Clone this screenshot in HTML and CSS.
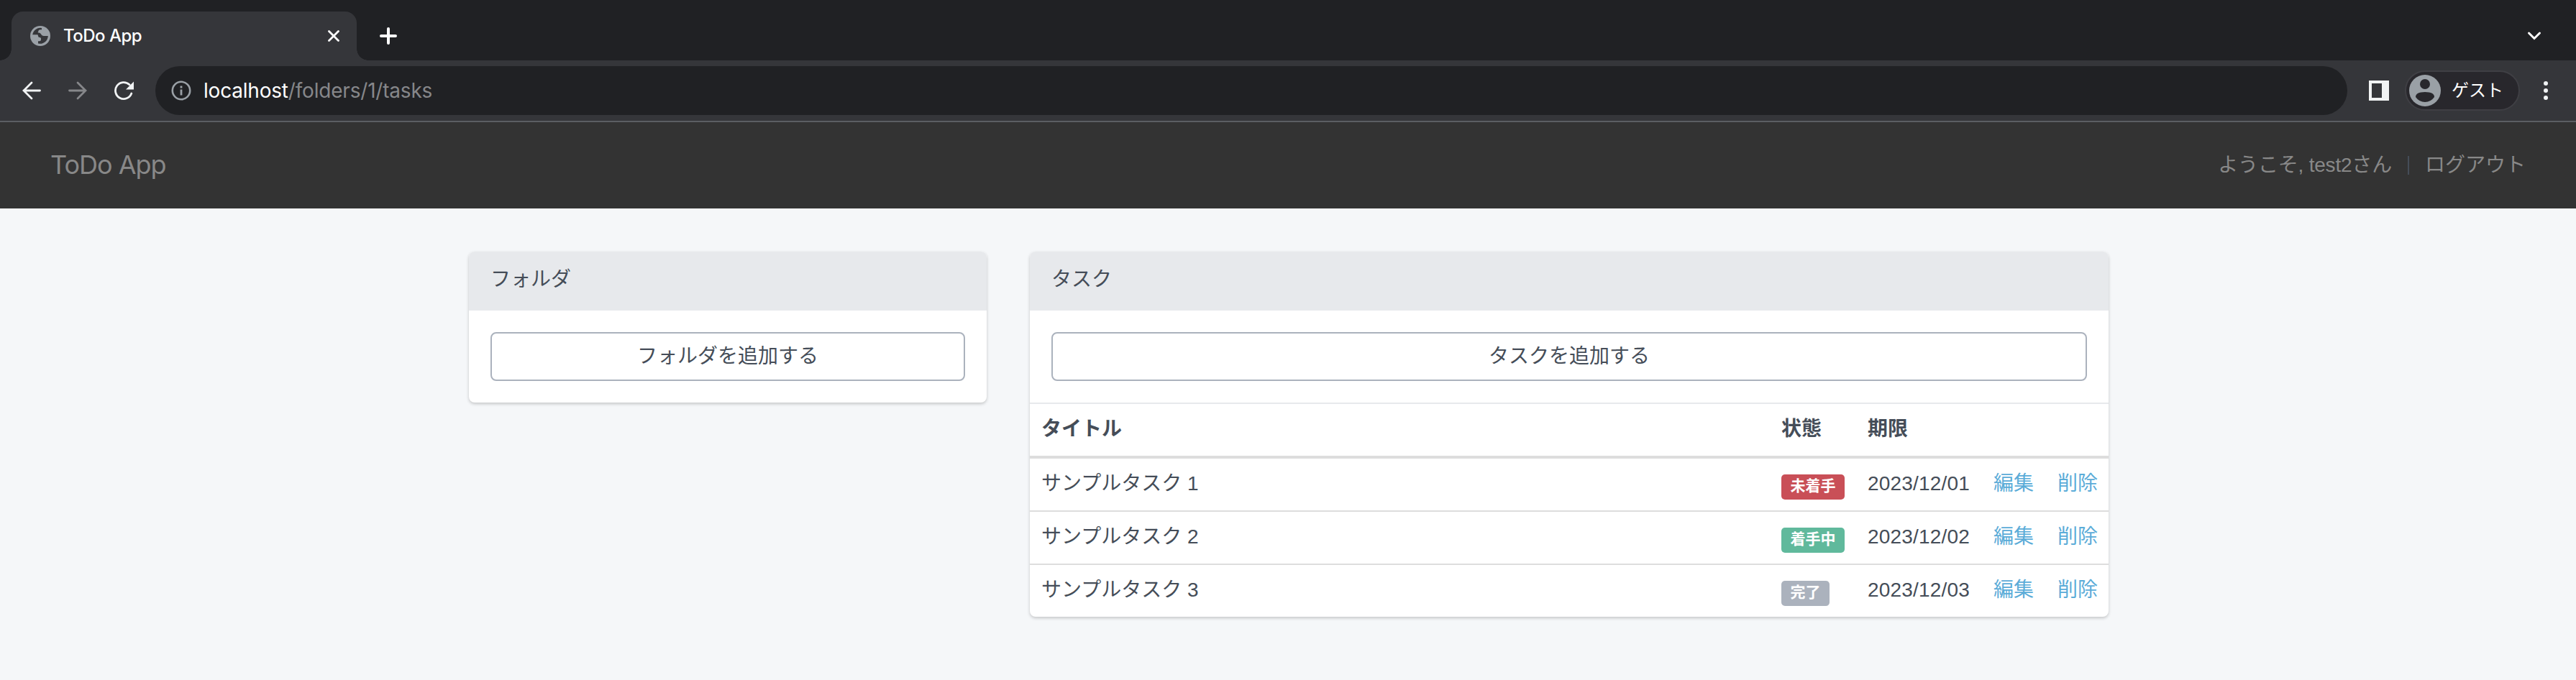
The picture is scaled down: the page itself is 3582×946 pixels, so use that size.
FILE: index.html
```html
<!DOCTYPE html>
<html lang="ja">
<head>
<meta charset="utf-8">
<title>ToDo App</title>
<link rel="stylesheet" href="styles.css">
</head>
<body>
<div class="tabstrip">
  <div class="tab">
    <svg class="globe" viewBox="0 0 28 28"><circle cx="14" cy="14" r="14" fill="#9aa0a6"/><path d="M16 3v2.200h-2.500q-2 0-2.300 2.500T9.500 9.500v2.800H3.200A11 11 0 0 1 16 3zM9.500 9.500H12q2 0 3 2t3.500 2.500h6.300A11 11 0 0 1 11 24.500v-3.300h2q2 0 2-2.200v-1.500q0-1.500-2-1.500t-2-2-1.500-2z" fill="#35363a"/></svg>
    <span class="tab-title">ToDo App</span>
    <svg class="close" viewBox="0 0 16 16"><path d="M1.500 1.500l13 13M14.500 1.500l-13 13" stroke="#fff" stroke-width="2.800" stroke-linecap="round"/></svg>
  </div>
  <svg class="plus" viewBox="0 0 24 24"><path d="M12 2v20M2 12h20" stroke="#fff" stroke-width="4" stroke-linecap="round"/></svg>
  <svg class="chevron" viewBox="0 0 20 14"><path d="M2.500 3l7.500 7.500L17.500 3" fill="none" stroke="#fff" stroke-width="3" stroke-linecap="round"/></svg>
</div>
<div class="toolbar">
  <svg class="nav-icon" viewBox="0 0 28 28"><path d="M25.500 14H3M14 3L3 14l11 11" fill="none" stroke="#f1f3f4" stroke-width="2.800" stroke-linecap="round"/></svg>
  <svg class="nav-icon" viewBox="0 0 28 28"><path d="M2.500 14H25M14 3l11 11-11 11" fill="none" stroke="#86878a" stroke-width="2.800" stroke-linecap="round"/></svg>
  <svg class="nav-icon" viewBox="0 0 28 28"><path d="M22 5.800A11.500 11.500 0 1 0 24.800 18" fill="none" stroke="#f1f3f4" stroke-width="2.800" stroke-linecap="round"/><path d="M28 1.500v11H17z" fill="#f1f3f4"/></svg>
  <div class="omnibox">
    <svg class="info" viewBox="0 0 28 28"><circle cx="14" cy="14" r="12.200" fill="none" stroke="#9aa0a6" stroke-width="2.600"/><path d="M14 12.500v8M14 7.500v3" stroke="#9aa0a6" stroke-width="2.800"/></svg>
    <span class="url"><b>localhost</b>/folders/1/tasks</span>
  </div>
  <svg class="panel" viewBox="0 0 28 28"><path fill-rule="evenodd" d="M0 0h28v28H0zM4 4v20h14V4z" fill="#f1f3f4"/></svg>
  <div class="profile">
    <svg class="avatar" viewBox="0 0 44 44"><circle cx="22" cy="22" r="22" fill="#9aa0a6"/><circle cx="22" cy="13" r="7" fill="#28272c"/><path d="M9 31q0-7 13-7t13 7q-5 7-13 7T9 31z" fill="#28272c"/></svg>
    <span>ゲスト</span>
  </div>
  <svg class="kebab" viewBox="0 0 6 28"><g fill="#f1f3f4"><circle cx="3" cy="4" r="3"/><circle cx="3" cy="14" r="3"/><circle cx="3" cy="24" r="3"/></g></svg>
</div>
<header class="navbar">
  <a class="brand">ToDo App</a>
  <nav class="user"><span class="welcome">ようこそ, test2さん</span><span class="sep"></span><a>ログアウト</a></nav>
</header>
<main class="columns">
  <section class="card folders">
    <h2 class="card-head">フォルダ</h2>
    <div class="card-body"><a class="button">フォルダを追加する</a></div>
  </section>
  <section class="card tasks">
    <h2 class="card-head">タスク</h2>
    <div class="card-body"><a class="button">タスクを追加する</a></div>
    <div class="table">
      <div class="row head"><span>タイトル</span><span>状態</span><span>期限</span><span></span><span></span></div>
      <div class="row"><span>サンプルタスク 1</span><span><i class="badge danger">未着手</i></span><span class="date">2023/12/01</span><a>編集</a><a>削除</a></div>
      <div class="row"><span>サンプルタスク 2</span><span><i class="badge success">着手中</i></span><span class="date">2023/12/02</span><a>編集</a><a>削除</a></div>
      <div class="row"><span>サンプルタスク 3</span><span><i class="badge muted">完了</i></span><span class="date">2023/12/03</span><a>編集</a><a>削除</a></div>
    </div>
  </section>
</main>
</body>
</html>
```
FILE: styles.css
```css
* { box-sizing: border-box; }
body {
  margin: 0;
  height: 946px;
  overflow: hidden;
  background: #f5f7f9;
  color: #454d58;
  font: 28px/40px "Liberation Sans", "Noto Sans CJK JP", sans-serif;
}
svg { display: block; flex: none; }
.tabstrip {
  display: flex;
  align-items: center;
  height: 84px;
  padding: 0 48px 0 16px;
  background: #202124;
}
.tab {
  position: relative;
  display: flex;
  align-items: center;
  align-self: flex-end;
  width: 480px;
  height: 68px;
  padding: 0 24px 0 26px;
  border-radius: 16px 16px 0 0;
  background: #35363a;
}
.tab::before, .tab::after {
  content: "";
  position: absolute;
  bottom: 0;
  width: 16px;
  height: 16px;
}
.tab::before { left: -16px; background: radial-gradient(circle at 0 0, transparent 15.5px, #35363a 16px); }
.tab::after { right: -16px; background: radial-gradient(circle at 100% 0, transparent 15.5px, #35363a 16px); }
.globe { width: 28px; height: 28px; }
.tab-title {
  margin-left: 18px;
  color: #fff;
  font: 500 24px/32px Inter, sans-serif;
  letter-spacing: -0.5px;
}
.close { width: 16px; height: 16px; margin-left: auto; }
.plus { width: 24px; height: 24px; margin: 16px 0 0 32px; }
.chevron { width: 20px; height: 14px; margin: 16px 0 0 auto; }
.toolbar {
  display: flex;
  align-items: center;
  height: 86px;
  padding-left: 30px;
  border-bottom: 2px solid #5b5e63;
  background: #35363a;
}
.nav-icon { width: 28px; height: 28px; margin-right: 36px; }
.omnibox {
  display: flex;
  align-items: center;
  width: 3048px;
  height: 68px;
  margin-left: -6px;
  padding-left: 22px;
  border-radius: 34px;
  background: #202124;
}
.info { width: 28px; height: 28px; }
.url {
  margin-left: 17px;
  color: #86878a;
  font: 28px/40px Inter, sans-serif;
  letter-spacing: -0.2px;
  white-space: nowrap;
}
.url b { color: #fff; font-weight: 400; }
.panel { width: 28px; height: 28px; margin-left: 30px; }
.profile {
  display: flex;
  align-items: center;
  width: 160px;
  height: 56px;
  margin-left: 22px;
  padding-left: 4px;
  border: 2px solid #3f3f44;
  border-radius: 28px;
  background: #28272c;
  color: #fff;
  font-size: 24px;
}
.avatar { width: 44px; height: 44px; margin-right: 15px; }
.kebab { width: 6px; height: 28px; margin-left: 33px; }
.navbar {
  display: flex;
  align-items: center;
  justify-content: space-between;
  height: 120px;
  padding: 0 70px;
  background: #333;
  color: #888;
}
.brand {
  padding-bottom: 2px;
  font: 36px/48px Inter, sans-serif;
  letter-spacing: -1px;
}
.user { display: flex; align-items: center; }
.welcome { letter-spacing: -0.2px; }
.sep { width: 2px; height: 26px; margin: 0 22px; background: #454d58; }
.columns {
  display: flex;
  align-items: flex-start;
  gap: 60px;
  padding: 60px 0 0 652px;
}
.card {
  overflow: hidden;
  border-radius: 8px;
  background: #fff;
  box-shadow: 0 2px 4px rgba(0, 0, 0, 0.2);
}
.folders { width: 720px; }
.tasks { width: 1500px; }
.card-head {
  height: 82px;
  margin: 0;
  padding: 19px 30px;
  background: #e7e9ec;
  font-size: 28px;
  font-weight: 400;
  line-height: 40px;
}
.card-body { padding: 30px; }
.button {
  display: block;
  height: 68px;
  border: 2px solid #abb2bd;
  border-radius: 8px;
  line-height: 63px;
  text-align: center;
}
.table { border-top: 2px solid #e7e9ec; }
.row {
  display: grid;
  grid-template-columns: 1029px 120px 175px 89px 87px;
  height: 72px;
}
.row > * { padding: 15px 16px; white-space: nowrap; line-height: 40px; }
.row + .row + .row { height: 74px; border-top: 2px solid #ddd; }
.row a { color: #5bacd8; }
.row.head { height: 76px; border-bottom: 4px solid #ddd; font-weight: 700; }
.date { letter-spacing: 0.2px; }
.badge {
  display: block;
  width: fit-content;
  height: 35px;
  margin-top: 7px;
  padding: 0 12.5px;
  border-radius: 5px;
  color: #fff;
  font-size: 21px;
  font-style: normal;
  font-weight: 700;
  line-height: 32px;
}
.danger { background: #c94f57; }
.success { background: #60b99c; }
.muted { background: #abb2bd; }
```
